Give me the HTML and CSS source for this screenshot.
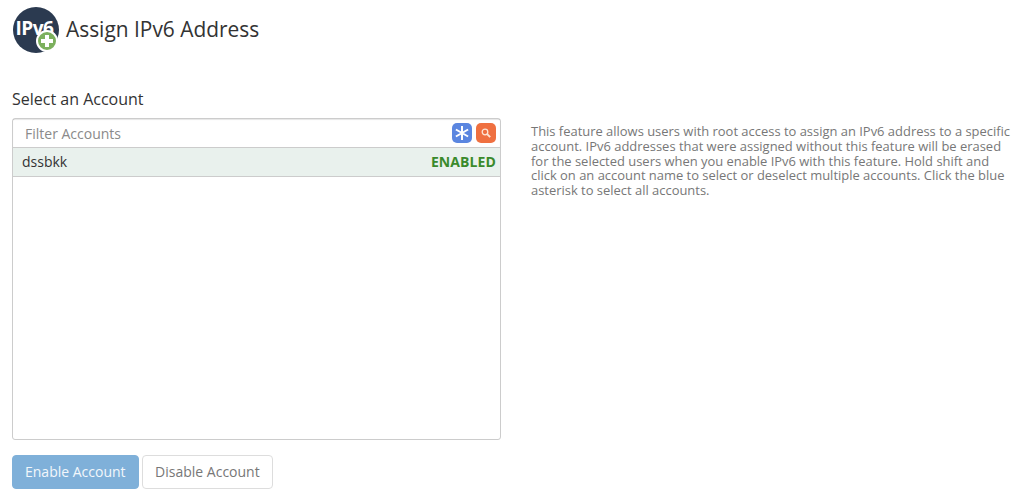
FILE: index.html
```html
<!DOCTYPE html>
<html lang="en">
<head>
    <meta charset="UTF-8">
    <title>Assign IPv6 Address</title>
    <link rel="stylesheet" href="styles.css">
</head>
<body>
    <div class="page-title">
        <div class="app-icon">
            <span class="app-icon-text">IPv6</span>
            <span class="app-icon-badge">
                <svg width="14" height="14" viewBox="0 0 14 14"><path d="M5 1h4v4h4v4H9v4H5V9H1V5h4z" fill="#fff"/></svg>
            </span>
        </div>
        <h1>Assign IPv6 Address</h1>
    </div>

    <div class="content">
        <div class="left-col">
            <div class="list-label">Select an Account</div>
            <div class="list-box">
                <div class="filter-row">
                    <span class="filter-text">Filter Accounts</span>
                    <span class="filter-btn blue">
                        <svg width="18" height="18" viewBox="0 0 18 18"><path d="M9 2v14M2.9 5.5l12.2 7M15.1 5.5l-12.2 7" stroke="#fff" stroke-width="2" fill="none"/></svg>
                    </span>
                    <span class="filter-btn orange">
                        <svg width="14" height="14" viewBox="0 0 14 14"><circle cx="6" cy="6" r="2.8" stroke="#fde4d4" stroke-width="1.3" fill="none"/><path d="M8.2 8.2l3 3" stroke="#fde4d4" stroke-width="1.9"/></svg>
                    </span>
                </div>
                <div class="account-row">
                    <span>dssbkk</span>
                    <span class="account-status">ENABLED</span>
                </div>
            </div>
            <div class="actions">
                <button class="btn btn-primary">Enable Account</button>
                <button class="btn btn-plain">Disable Account</button>
            </div>
        </div>
        <p class="help-text">This feature allows users with root access to assign an IPv6 address to a specific account. IPv6 addresses that were assigned without this feature will be erased for the selected users when you enable IPv6 with this feature. Hold shift and click on an account name to select or deselect multiple accounts. Click the blue asterisk to select all accounts.</p>
    </div>
</body>
</html>
```

FILE: styles.css
```css
body {
    margin: 0;
    padding: 6px 12px 0;
    background: #fff;
    color: #333;
    font-family: "Open Sans", sans-serif;
    font-size: 14px;
}

.page-title {
    display: flex;
    align-items: center;
    gap: 7px;
    height: 47px;
}

.page-title h1 {
    margin: 0 0 2px;
    font-size: 20.9px;
    font-weight: 400;
    color: #333;
}

.app-icon {
    position: relative;
    width: 46px;
    height: 46px;
    border-radius: 50%;
    background: #2b3a50;
    margin-left: 1px;
    display: flex;
    justify-content: center;
}

.app-icon-text {
    padding-right: 3px;
    color: #fff;
    font-size: 19px;
    font-weight: 700;
    line-height: 43px;
    letter-spacing: -0.5px;
}

.app-icon-badge {
    position: absolute;
    right: 1px;
    bottom: 1px;
    width: 18px;
    height: 18px;
    border-radius: 50%;
    background: #7cb05d;
    border: 2px solid #fff;
    display: flex;
    align-items: center;
    justify-content: center;
}

.content {
    display: flex;
    gap: 30px;
    margin-top: 36px;
}

.left-col {
    width: 489px;
    flex-shrink: 0;
}

.list-label {
    font-size: 16px;
    line-height: 20px;
    margin-bottom: 9px;
}

.list-box {
    height: 322px;
    border: 1px solid #ccc;
    border-radius: 3px;
    box-sizing: border-box;
}

.filter-row {
    display: flex;
    align-items: center;
    gap: 4px;
    height: 28px;
    padding: 0 4px 0 12px;
    border-bottom: 1px solid #ccc;
    box-shadow: inset 0 1px 1px rgba(0,0,0,0.1);
}

.filter-text {
    flex: 1;
    color: #8a8a8a;
}

.filter-btn {
    width: 20px;
    height: 20px;
    border-radius: 5px;
    display: flex;
    align-items: center;
    justify-content: center;
}

.filter-btn.blue {
    background: #5b86e0;
}

.filter-btn.orange {
    background: #ef7040;
}

.account-row {
    display: flex;
    justify-content: space-between;
    align-items: center;
    box-sizing: border-box;
    height: 29px;
    padding: 0 4px 1px 9px;
    background: #e9f1ed;
    border-bottom: 1px solid #ccc;
}

.account-status {
    color: #3a8a2c;
    font-weight: 700;
    letter-spacing: 0.1px;
}

.actions {
    display: flex;
    gap: 3px;
    margin-top: 15px;
}

.btn {
    height: 34px;
    padding: 0 12px 2px;
    border: 1px solid #ddd;
    border-radius: 4px;
    background: #fff;
    color: #777;
    font-family: inherit;
    font-size: 14px;
}

.btn-plain {
    padding: 0 12.5px 2px;
}

.btn-primary {
    background: #7fb0d9;
    border-color: #7fb0d9;
    color: #f2f7fb;
}

.help-text {
    margin: 35px 0 0;
    width: 482px;
    color: #777;
    font-size: 12.95px;
    line-height: 14.8px;
}
```
